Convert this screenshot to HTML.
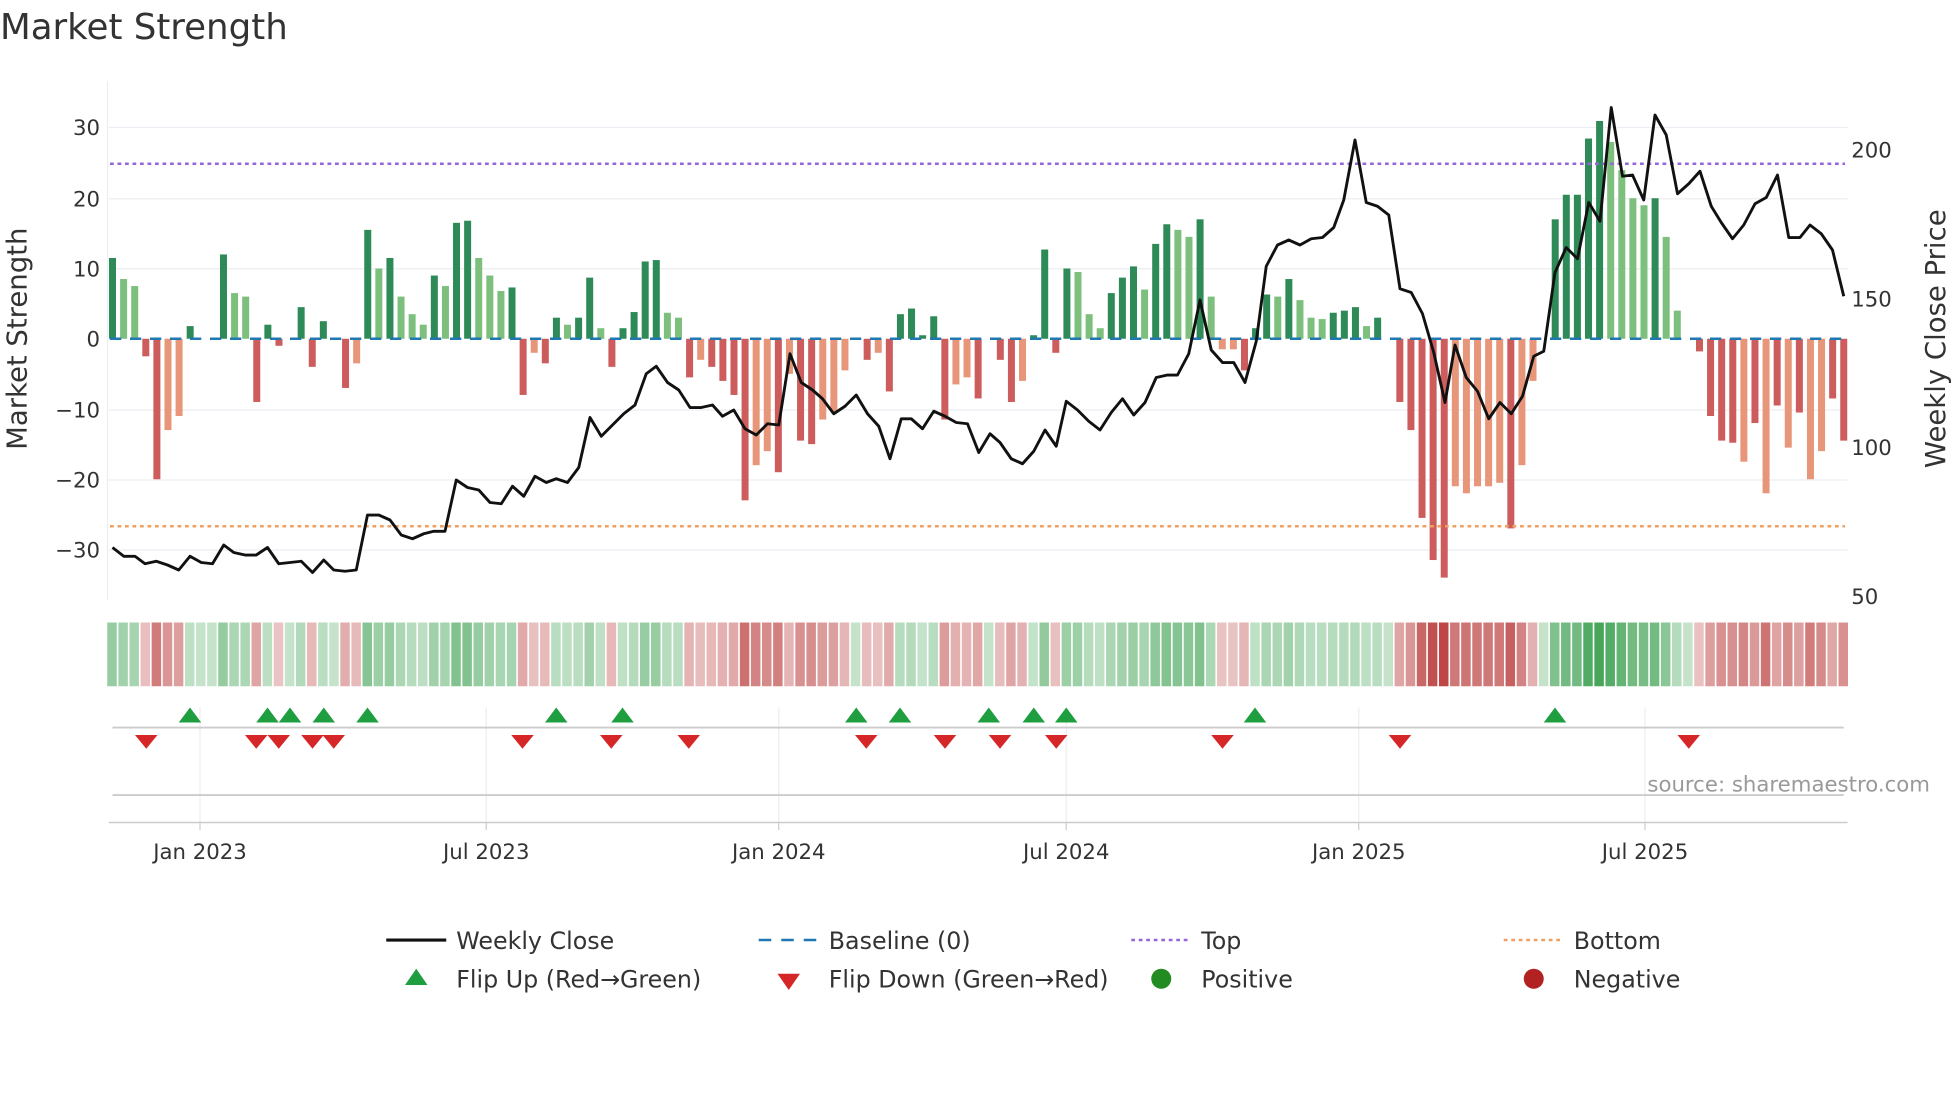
<!DOCTYPE html>
<html><head><meta charset="utf-8">
<style>
html,body{margin:0;padding:0;background:#fff;width:1960px;height:1102px;overflow:hidden}
#w{width:1568px;height:882px;transform:scale(1.25,1.25);transform-origin:0 0;position:relative}
svg text{font-family:"DejaVu Sans","Liberation Sans",sans-serif;fill:#333}
</style></head><body>
<div id="w">
<svg id="s" width="1568" height="882" viewBox="0 0 1568 882" xmlns="http://www.w3.org/2000/svg">
<text x="0" y="31" font-size="28.5">Market Strength</text>
<g stroke="#eceef3" stroke-width="1">
<line x1="87" x2="1478" y1="102" y2="102"/><line x1="87" x2="1478" y1="159" y2="159"/>
<line x1="87" x2="1478" y1="215" y2="215"/><line x1="87" x2="1478" y1="328" y2="328"/>
<line x1="87" x2="1478" y1="384" y2="384"/><line x1="87" x2="1478" y1="440" y2="440"/>
<line x1="86" x2="86" y1="65" y2="480"/>
</g>
<g font-size="17" text-anchor="end">
<text x="80" y="108">30</text><text x="80" y="165">20</text><text x="80" y="221">10</text>
<text x="80" y="277">0</text><text x="80" y="334">−10</text><text x="80" y="390">−20</text><text x="80" y="446">−30</text>
</g>
<g font-size="17">
<text x="1481" y="126">200</text><text x="1481" y="245">150</text><text x="1481" y="364">100</text><text x="1481" y="483">50</text>
</g>
<text transform="translate(21,271) rotate(-90)" font-size="22" text-anchor="middle">Market Strength</text>
<text transform="translate(1556,271) rotate(-90)" font-size="22" text-anchor="middle">Weekly Close Price</text>
<g id="bars"></g>
<line x1="88" x2="1476" y1="271" y2="271" stroke="#1f77b4" stroke-width="2" stroke-dasharray="9,7"/>
<line x1="88" x2="1476" y1="131" y2="131" stroke="#9467dd" stroke-width="2" stroke-dasharray="3,3"/>
<line x1="88" x2="1476" y1="421" y2="421" stroke="#f0a060" stroke-width="2" stroke-dasharray="3,3"/>
<polyline id="pl" fill="none" stroke="#111" stroke-width="2.3" stroke-linejoin="round"/>
<g id="strip"></g>
<g stroke="#eceef3"><line x1="160" x2="160" y1="566" y2="658"/><line x1="389" x2="389" y1="566" y2="658"/><line x1="623" x2="623" y1="566" y2="658"/><line x1="853" x2="853" y1="566" y2="658"/><line x1="1087" x2="1087" y1="566" y2="658"/><line x1="1316" x2="1316" y1="566" y2="658"/></g>
<line x1="90" x2="1475" y1="582" y2="582" stroke="#ccc" stroke-width="1.5"/>
<line x1="90" x2="1475" y1="636" y2="636" stroke="#ccc" stroke-width="1.5"/>
<line x1="87" x2="1478" y1="658" y2="658" stroke="#ccc" stroke-width="1.2"/>
<g stroke="#ccc"><line x1="160" x2="160" y1="658" y2="664"/><line x1="389" x2="389" y1="658" y2="664"/><line x1="623" x2="623" y1="658" y2="664"/><line x1="853" x2="853" y1="658" y2="664"/><line x1="1087" x2="1087" y1="658" y2="664"/><line x1="1316" x2="1316" y1="658" y2="664"/></g>
<g id="mk"></g>
<text x="1544" y="633" font-size="17" text-anchor="end" style="fill:#999">source: sharemaestro.com</text>
<g font-size="17" text-anchor="middle">
<text x="160" y="687">Jan 2023</text><text x="389" y="687">Jul 2023</text><text x="623" y="687">Jan 2024</text>
<text x="853" y="687">Jul 2024</text><text x="1087" y="687">Jan 2025</text><text x="1316" y="687">Jul 2025</text>
</g>
<g font-size="19">
<line x1="309" x2="357" y1="752" y2="752" stroke="#111" stroke-width="2.5"/><text x="365" y="759">Weekly Close</text>
<line x1="607" x2="655" y1="752" y2="752" stroke="#1f77b4" stroke-width="2" stroke-dasharray="10,8"/><text x="663" y="759">Baseline (0)</text>
<line x1="905" x2="953" y1="752" y2="752" stroke="#9467dd" stroke-width="2" stroke-dasharray="3,3"/><text x="961" y="759">Top</text>
<line x1="1203" x2="1251" y1="752" y2="752" stroke="#f0a060" stroke-width="2" stroke-dasharray="3,3"/><text x="1259" y="759">Bottom</text>
<polygon points="324,788 342,788 333,775" fill="#1f9e3f"/><text x="365" y="790">Flip Up (Red→Green)</text>
<polygon points="622,779 640,779 631,792" fill="#d62728"/><text x="663" y="790">Flip Down (Green→Red)</text>
<circle cx="929" cy="783" r="8" fill="#228b22"/><text x="961" y="790">Positive</text>
<circle cx="1227" cy="783" r="8" fill="#b22222"/><text x="1259" y="790">Negative</text>
</g>
</svg>
</div>
<script>
var v=[11.5,8.5,7.5,-2.5,-20,-13,-11,1.8,0,0,12,6.5,6,-9,2,-1,0,4.5,-4,2.5,0,-7,-3.5,15.5,10,11.5,6,3.5,2,9,7.5,16.5,16.8,11.5,9,6.8,7.3,-8,-2,-3.5,3,2,3,8.7,1.5,-4,1.5,3.8,11,11.2,3.7,3,-5.5,-3,-4,-6,-8,-23,-18,-16,-19,-5,-14.5,-15,-11.5,-10.5,-4.5,0,-3,-2,-7.5,3.5,4.3,0.5,3.2,-11.5,-6.5,-5.5,-8.5,0,-3,-9,-6,0.5,12.7,-2,10,9.5,3.5,1.5,6.5,8.7,10.3,7,13.5,16.3,15.5,14.5,17,6,-1.5,-1.5,-4.5,1.5,6.3,6,8.5,5.5,3,2.8,3.7,4,4.5,1.8,3,0,-9,-13,-25.5,-31.5,-34,-21,-22,-21,-21,-20.5,-27,-18,-6,0,17,20.5,20.5,28.5,31,28,24,20,19,20,14.5,4,0,-1.8,-11,-14.5,-14.8,-17.5,-12,-22,-9.5,-15.5,-10.5,-20,-16,-8.5,-14.5];
var lt=[0,1,1,0,0,1,1,0,0,0,0,1,1,0,0,0,0,0,0,0,0,0,1,0,1,0,1,1,1,0,1,0,0,1,1,1,0,0,1,0,0,1,0,0,1,0,0,0,0,0,1,1,0,1,0,0,0,0,1,1,0,1,0,0,1,1,1,0,0,1,0,0,0,0,0,0,1,1,0,0,0,0,1,0,0,0,0,1,1,1,0,0,0,1,0,0,1,1,0,1,1,1,0,0,0,1,0,1,1,1,0,0,0,1,0,0,0,0,0,0,0,1,1,1,1,1,0,1,1,0,0,0,0,0,0,1,1,1,1,0,1,1,0,0,0,0,0,1,0,1,0,1,0,1,1,0];
var NS="http://www.w3.org/2000/svg";
function el(t,a,p){var e=document.createElementNS(NS,t);for(var k in a)e.setAttribute(k,a[k]);p.appendChild(e);return e}
var B=document.getElementById('bars'),S=document.getElementById('strip'),st=(1475-90)/(v.length-1);
function mix(c,t){return 'rgb('+c.map(function(x){return Math.round(255+(x-255)*t)}).join(',')+')'}
for(var i=0;i<v.length;i++){var x=90+i*st,h=v[i]*5.62,l=lt[i];
 var col=v[i]>=0?(l?'#7dbf7d':'#2e8b57'):(l?'#e8967a':'#cd5c5c');
 if(Math.abs(h)>0.3)el('rect',{x:x-2.8,y:h>0?271-h:271,width:5.6,height:Math.abs(h),fill:col},B);
 var t=0.3+Math.min(Math.abs(v[i]),34)/34*0.7;
 var c=v[i]>=0?mix([60,160,80],t):mix([190,70,70],t);
 el('rect',{x:x-4.2,y:498,width:7.6,height:51,fill:c},S);}
var P=[[90,438],[99,445],[108,445],[116,451],[125,449],[134,452],[143,456],[152,445],[161,450],[170,451],[179,436],[187,442],[196,444],[205,444],[214,438],[223,451],[232,450],[241,449],[250,458],[259,448],[267,456],[276,457],[285,456],[294,412],[303,412],[312,416],[321,428],[330,431],[339,427],[347,425],[356,425],[365,384],[374,390],[383,392],[392,402],[401,403],[410,389],[419,397],[428,381],[437,386],[445,383],[454,386],[463,374],[472,334],[481,349],[490,340],[499,331],[508,324],[517,299],[525,293],[534,306],[543,312],[552,326],[561,326],[570,324],[578,333],[587,328],[596,343],[605,348],[614,339],[623,340],[632,283],[641,306],[650,312],[658,319],[667,331],[676,325],[685,316],[694,331],[703,341],[712,367],[721,335],[729,335],[738,343],[747,329],[756,333],[765,338],[774,339],[783,362],[792,347],[800,354],[809,367],[818,371],[827,361],[836,344],[845,357],[853,321],[862,328],[871,337],[880,344],[889,330],[898,319],[907,332],[916,322],[925,302],[934,300],[942,300],[951,283],[960,240],[969,280],[978,290],[987,290],[996,306],[1005,273],[1013,213],[1022,196],[1031,192],[1040,196],[1049,191],[1058,190],[1067,182],[1075,160],[1084,112],[1093,162],[1102,165],[1111,172],[1120,231],[1129,234],[1138,251],[1147,282],[1156,322],[1164,276],[1173,302],[1182,313],[1191,335],[1200,322],[1209,331],[1218,317],[1227,285],[1235,281],[1244,218],[1253,198],[1262,207],[1271,162],[1280,177],[1289,86],[1298,141],[1306,140],[1315,160],[1324,92],[1333,108],[1342,155],[1351,147],[1360,137],[1369,165],[1377,178],[1386,191],[1395,180],[1404,163],[1413,158],[1422,140],[1431,190],[1440,190],[1448,180],[1457,187],[1466,200],[1475,237]];
document.getElementById('pl').setAttribute('points',P.map(function(p){return p.join(',')}).join(' '));
var M=document.getElementById('mk');
[152,214,232,259,294,445,498,685,720,791,827,853,1004,1244].forEach(function(x){el('polygon',{points:(x-9)+',578 '+(x+9)+',578 '+x+',566',fill:'#1f9e3f'},M)});
[117,205,223,250,267,418,489,551,693,756,800,845,978,1120,1351].forEach(function(x){el('polygon',{points:(x-9)+',588 '+(x+9)+',588 '+x+',599',fill:'#d62728'},M)});
</script>
</body></html>
